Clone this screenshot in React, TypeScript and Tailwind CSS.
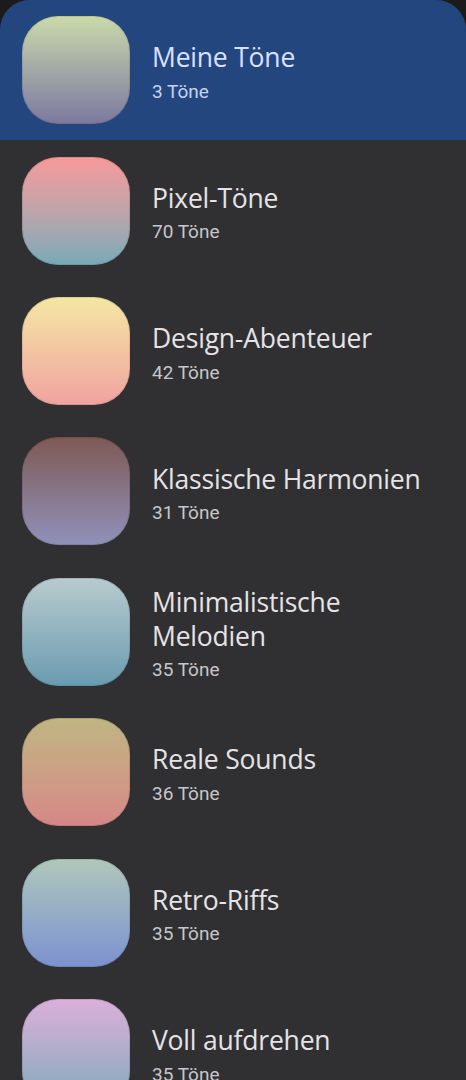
const items = [
  { name: "Meine Töne", count: 3, grad: "from-[#cbdaa8] to-[#7c789f]", selected: true },
  { name: "Pixel-Töne", count: 70, grad: "from-[#f7999a] to-[#76aab8]" },
  { name: "Design-Abenteuer", count: 42, grad: "from-[#f3e7a3] to-[#f0a2a0]" },
  { name: "Klassische Harmonien", count: 31, grad: "from-[#7e5955] to-[#8f91bb]" },
  { name: "Minimalistische Melodien", count: 35, grad: "from-[#b8cbce] to-[#6a9bb0]" },
  { name: "Reale Sounds", count: 36, grad: "from-[#bfb682] to-[#d68787]" },
  { name: "Retro-Riffs", count: 35, grad: "from-[#b0c7ba] to-[#7c91d0]" },
  { name: "Voll aufdrehen", count: 35, grad: "from-[#dbafda] to-[#7aaabb]" },
];

export default function App() {
  return (
    <div className="h-[1080px] w-[466px] overflow-hidden bg-[#1b1b1c]">
      <div className="min-h-full bg-[#303032] rounded-t-[30px] overflow-hidden">
        {items.map((it) => (
          <div
            key={it.name}
            className={`flex items-center h-[140.4px] pl-[22px] pr-4 gap-[22px] ${
              it.selected ? "bg-[#24467f]" : ""
            }`}
          >
            <div
              className={`w-[108px] h-[108px] shrink-0 rounded-[36px] bg-gradient-to-b ${it.grad} ring-1 ring-inset ring-black/10`}
            />
            <div className="flex flex-col pt-[6px]">
              <div
                className={`font-['Open_Sans',sans-serif] text-[26.5px] leading-[33.5px] font-medium tracking-[-0.2px] ${
                  it.selected ? "text-[#d8e2ff]" : "text-[#e6e3e6]"
                }`}
              >
                {it.name === "Minimalistische Melodien" ? (
                  <>
                    Minimalistische
                    <br />
                    Melodien
                  </>
                ) : (
                  it.name
                )}
              </div>
              <div
                className={`font-['Roboto',sans-serif] text-[19px] leading-[26px] mt-[4px] ${
                  it.selected ? "text-[#c4d2f2]" : "text-[#c7c6ca]"
                }`}
              >
                {it.count} Töne
              </div>
            </div>
          </div>
        ))}
      </div>
    </div>
  );
}
